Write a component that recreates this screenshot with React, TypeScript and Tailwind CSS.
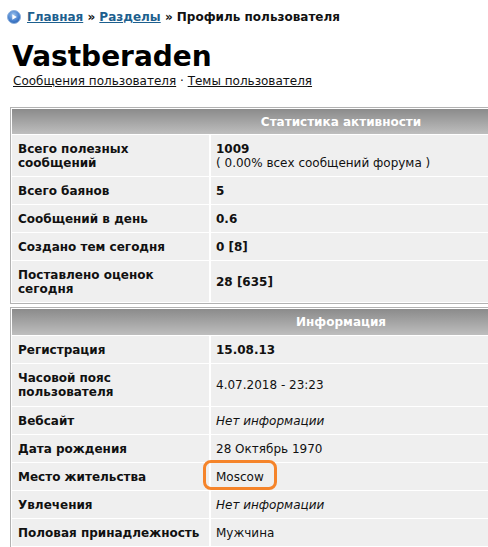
import React from "react"

type Row = { label: string; value: React.ReactNode; tall?: boolean }

const statRows: Row[] = [
  {
    label: "Всего полезных сообщений",
    tall: true,
    value: (
      <div>
        <div className="font-bold">1009</div>
        <div>( 0.00% всех сообщений форума )</div>
      </div>
    ),
  },
  { label: "Всего баянов", value: <span className="font-bold">5</span> },
  { label: "Сообщений в день", value: <span className="font-bold">0.6</span> },
  { label: "Создано тем сегодня", value: <span className="font-bold">0 [8]</span> },
  { label: "Поставлено оценок сегодня", tall: true, value: <span className="font-bold">28 [635]</span> },
]

const infoRows: Row[] = [
  { label: "Регистрация", value: <span className="font-bold">15.08.13</span> },
  { label: "Часовой пояс пользователя", tall: true, value: "4.07.2018 - 23:23" },
  { label: "Вебсайт", value: <i>Нет информации</i> },
  { label: "Дата рождения", value: "28 Октябрь 1970" },
  { label: "Место жительства", value: "Moscow" },
  { label: "Увлечения", value: <i>Нет информации</i> },
  { label: "Половая принадлежность", value: "Мужчина" },
]

function PlayIcon() {
  return (
    <svg width="14" height="14" viewBox="0 0 14 14">
      <defs>
        <radialGradient id="pb" cx="45%" cy="35%" r="70%">
          <stop offset="0%" stopColor="#9cc3ee" />
          <stop offset="70%" stopColor="#3f79c9" />
          <stop offset="100%" stopColor="#2b5ea8" />
        </radialGradient>
      </defs>
      <circle cx="7" cy="7" r="6.5" fill="url(#pb)" stroke="#8fb2de" strokeWidth="1" />
      <path d="M5.3 4.2 L9.8 7 L5.3 9.8 Z" fill="#ffffff" />
    </svg>
  )
}

function ProfileTable({ title, rows, loose }: { title: string; rows: Row[]; loose?: boolean }) {
  const tallH = loose ? "h-[42px]" : "h-[41px]"
  return (
    <div className="w-[662px] border border-[#b2b2b2] bg-white p-px">
      <div
        className={`flex items-center justify-center bg-gradient-to-b from-[#8b8b8b] to-[#bebebe] text-[12px] font-bold text-white ${loose ? "h-[26px]" : "h-[25px]"}`}
      >
        {title}
      </div>
      <div className="mt-px grid grid-cols-[197px_1fr] gap-x-[2px] gap-y-px">
        {rows.map((r) => (
          <React.Fragment key={r.label}>
            <div
              className={`flex items-center bg-[#efefef] pl-[6px] pr-2 font-bold leading-[14px] ${r.tall ? tallH : "h-[27px]"}`}
            >
              <span className={r.tall ? "w-[150px]" : ""}>{r.label}</span>
            </div>
            <div className="flex items-center bg-[#efefef] pl-[5px] leading-[14px]">{r.value}</div>
          </React.Fragment>
        ))}
      </div>
    </div>
  )
}

export default function App() {
  return (
    <div className="relative h-[547px] w-[488px] overflow-hidden bg-white font-['DejaVu_Sans',Verdana,sans-serif] text-[12px] text-[#111]">
      <div className="flex items-center gap-[6px] pl-[7px] pt-[10px] font-bold leading-[14px]">
        <PlayIcon />
        <span>
          <a href="#" className="text-[#1d5f8e] underline">Главная</a> »{" "}
          <a href="#" className="text-[#1d5f8e] underline">Разделы</a> » Профиль пользователя
        </span>
      </div>

      <h1 className="ml-[12px] mt-[16px] text-[28px] font-bold leading-[34px] text-black">Vastberaden</h1>
      <div className="ml-[13px] leading-[14px]">
        <a href="#" className="underline">Сообщения пользователя</a> ·{" "}
        <a href="#" className="underline">Темы пользователя</a>
      </div>

      <div className="ml-[10px] mt-[19px] flex flex-col gap-[3px]">
        <ProfileTable title="Статистика активности" rows={statRows} />
        <ProfileTable title="Информация" rows={infoRows} loose />
      </div>

      <div className="pointer-events-none absolute left-[203px] top-[460px] h-[30px] w-[74px] rounded-[8px] border-[3px] border-[#f5842a]" />
    </div>
  )
}
